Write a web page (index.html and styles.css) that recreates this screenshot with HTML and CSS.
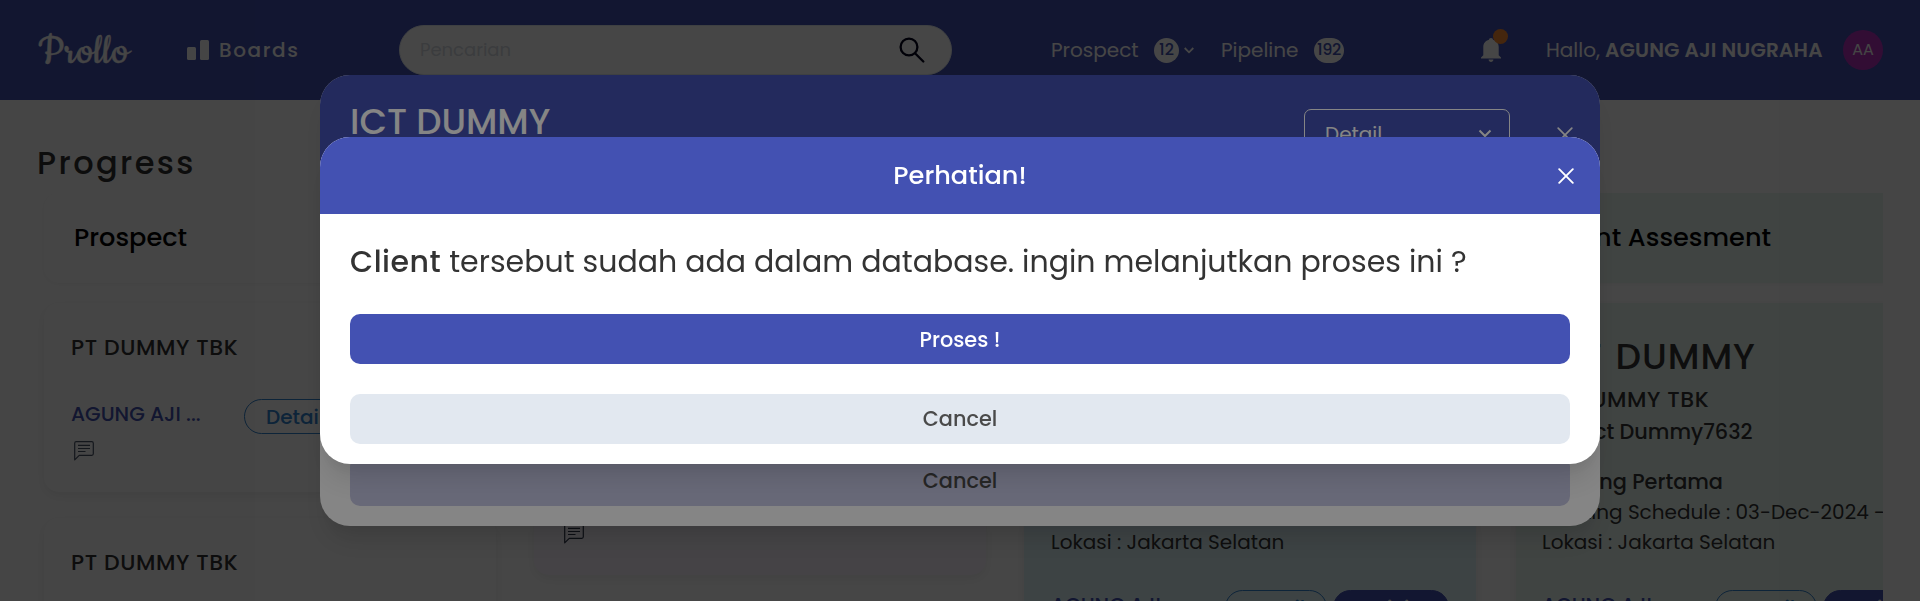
FILE: index.html
```html
<!DOCTYPE html>
<html lang="id">
<head>
<meta charset="utf-8">
<title>Prollo</title>
<link rel="stylesheet" href="styles.css">
</head>
<body>
<div class="app">
  <header class="topbar">
    <div class="logo">Prollo</div>
    <div class="boards">
      <svg width="22" height="20" viewBox="0 0 22 20" fill="currentColor"><rect x="0" y="7" width="9" height="13" rx="1.5"/><rect x="13" y="0" width="9" height="20" rx="1.5"/></svg>
      <span class="boards-label">Boards</span>
    </div>
    <div class="search">
      <span class="placeholder">Pencarian</span>
      <svg width="26" height="26" viewBox="0 0 26 26" fill="none" stroke="#00001a" stroke-width="2.3" stroke-linecap="round"><circle cx="10" cy="10" r="8.4"/><path d="M16 16.2l8.3 8.3"/></svg>
    </div>
    <nav class="counts">
      <span class="nav-prospect">Prospect</span><span class="badge"><span class="b12">12</span></span>
      <svg class="nav-chev" width="10" height="7" viewBox="0 0 10 7" fill="none" stroke="currentColor" stroke-width="1.8"><path d="M.7 1l4.3 4.3L9.3 1"/></svg>
      <span class="nav-pipeline">Pipeline</span><span class="badge wide"><span class="b192">192</span></span>
    </nav>
    <div class="bell">
      <svg width="20" height="24" viewBox="0 0 20 24" fill="currentColor"><path d="M10 0c1.2 0 2 .8 2 1.800 3.600.9 5.700 3.700 5.700 7.200v8.200l2.300 2.300v1H0v-1l2.300-2.300V9c0-3.500 2.100-6.300 5.700-7.200C8 .8 8.800 0 10 0zM7.600 21.600h4.800c0 1.400-1.100 2.400-2.400 2.400s-2.400-1-2.400-2.400z"/></svg>
      <i class="dot"></i>
    </div>
    <div class="user"><span class="hallo">Hallo,</span><span class="username">AGUNG AJI NUGRAHA</span></div>
    <div class="avatar">AA</div>
  </header>

  <main class="page">
    <h1 class="title">Progress</h1>
    <div class="board">
      <section class="col col-a">
        <div class="col-head"><span class="t-prospect">Prospect</span></div>
        <article class="card first">
          <div class="client">PT DUMMY TBK</div>
          <div class="row"><span class="owner">AGUNG AJI ...</span><span class="pill">Detail</span></div>
          <svg class="note" width="20" height="20" viewBox="0 0 20 20" fill="none" stroke="#4a5568" stroke-width="1.2" stroke-linejoin="round"><path d="M.7 18.800V2.200Q.7.700 2.200.700h15.600q1.500 0 1.500 1.500v10.600q0 1.500-1.500 1.500H5.200z"/><path d="M4 4.300h12M4 7.500h12M4 10.500h7.500"/></svg>
        </article>
        <article class="card next"><div class="client">PT DUMMY TBK</div></article>
      </section>
      <section class="col col-b">
        <div class="col-head"></div>
        <article class="card lilac">
          <svg class="note" width="20" height="20" viewBox="0 0 20 20" fill="none" stroke="#2d3748" stroke-width="1.2" stroke-linejoin="round"><path d="M.7 18.800V2.200Q.7.700 2.200.700h15.600q1.500 0 1.500 1.500v10.600q0 1.500-1.500 1.500H5.200z"/><path d="M4 4.300h12M4 7.500h12M4 10.500h7.500"/></svg>
        </article>
      </section>
      <section class="col col-c">
        <div class="col-head"></div>
        <article class="card blue">
          <div class="line">Lokasi : Jakarta Selatan</div>
          <div class="row"><span class="owner">AGUNG AJI ...</span><span class="pill">Detail</span><span class="pill solid">Activity</span></div>
        </article>
      </section>
      <section class="col col-d">
        <div class="col-head green"><span class="t-assess">Client Assesment</span></div>
        <article class="card green tall">
          <div class="big">ICT DUMMY</div>
          <div class="client">PT DUMMY TBK</div>
          <div class="project">Project Dummy7632</div>
          <div class="meeting">Meeting Pertama</div>
          <div class="line sched">Meeting Schedule : 03-Dec-2024 -</div>
          <div class="line">Lokasi : Jakarta Selatan</div>
          <div class="row"><span class="owner">AGUNG AJI ...</span><span class="pill">Detail</span><span class="pill solid">Activity</span></div>
        </article>
      </section>
    </div>
  </main>
</div>

<div class="overlay">
  <div class="modal modal-detail">
    <div class="modal-head detail-head">
      <span class="detail-title">ICT DUMMY</span>
      <span class="select"><span class="select-label">Detail</span><svg width="14" height="10" viewBox="0 0 14 10" fill="none" stroke="currentColor" stroke-width="2"><path d="M1.500 1.500L7 7l5.500-5.500"/></svg></span>
      <svg class="x-low" width="16" height="16" viewBox="0 0 16 16" fill="none" stroke="currentColor" stroke-width="1.700" stroke-linecap="round"><path d="M1.200 1.200l13.600 13.600M14.800 1.200L1.200 14.800"/></svg>
    </div>
    <div class="button muted"><span class="cancel">Cancel</span></div>
  </div>
</div>

<div class="overlay">
  <div class="modal modal-alert">
    <div class="modal-head alert-head">
      <span class="alert-title">Perhatian!</span>
      <svg class="x-top" width="16" height="16" viewBox="0 0 16 16" fill="none" stroke="currentColor" stroke-width="1.900" stroke-linecap="round"><path d="M1.200 1.200l13.600 13.600M14.800 1.200L1.200 14.800"/></svg>
    </div>
    <div class="alert-body">
      <p class="message"><b>Client</b> <span class="rest">tersebut sudah ada dalam database. ingin melanjutkan proses ini ?</span></p>
      <div class="button primary"><span class="proses">Proses !</span></div>
      <div class="button light"><span class="cancel">Cancel</span></div>
    </div>
  </div>
</div>
</body>
</html>
```
FILE: styles.css
```css
* { box-sizing: border-box; }
html, body { margin: 0; height: 601px; overflow: hidden; background: #fff; }
body { font-family: Poppins, Inter, "Open Sans", sans-serif; font-size: 20px; line-height: 30px; color: #333; white-space: nowrap; }
svg { display: block; flex: none; }
span { flex: none; }

.app { height: 601px; overflow: hidden; }
.topbar { height: 100px; background: #4351b2; color: #fff; display: flex; align-items: center; padding-left: 38px; }
.logo { width: 149px; padding-top: 3px; font-family: Cookie, "Grand Hotel", Satisfy, "Dancing Script", "Liberation Serif", serif; font-size: 47px; line-height: 50px; letter-spacing: 0.500px; -webkit-text-stroke: 0.300px #fff; }
.boards { width: 212px; display: flex; align-items: center; gap: 10px; }
.boards-label { font-weight: 500; letter-spacing: 1.600px; }
.search { width: 553px; height: 50px; border-radius: 25px; border: 1px solid #e2e8f0; background: #fff; padding: 0 26px 0 20px; display: flex; align-items: center; justify-content: space-between; }
.placeholder { color: #d5dae2; font-size: 18px; }
.counts { margin-left: 99px; width: 430px; display: flex; align-items: center; }
.nav-prospect { width: 103px; }
.nav-pipeline { width: 93px; }
.badge { width: 25px; height: 25px; border-radius: 13px; background: #fff; color: #4351b2; font-size: 16px; font-weight: 500; display: flex; align-items: center; justify-content: center; }
.badge.wide { width: 30px; }
.b192 { letter-spacing: -0.3px; }
.nav-chev { margin: 0 27px 0 5px; }
.bell { position: relative; width: 65px; }
.dot { position: absolute; left: 12px; top: -9px; width: 15px; height: 15px; border-radius: 50%; background: #fb8c32; }
.user { width: 297px; display: flex; gap: 5px; }
.username { font-weight: 600; letter-spacing: 0.200px; }
.avatar { width: 40px; height: 40px; border-radius: 50%; background: #b832c0; font-size: 16px; display: flex; align-items: center; justify-content: center; }

.title { margin: 0; padding: 39px 0 0 37px; height: 93px; font-size: 32px; line-height: 48px; font-weight: 500; letter-spacing: 2.400px; }
.board { display: flex; padding-left: 44px; width: 1883px; overflow: hidden; height: 408px; }
.col { flex: none; }
.col-a { width: 490px; }
.col-b { width: 490px; }
.col-c { width: 492px; }
.col-d { width: 452px; }
.col-head { width: 452px; height: 90px; margin-bottom: 20px; padding: 0 0 2px 30px; display: flex; align-items: center; color: #000; font-size: 25.600px; font-weight: 500; border-radius: 15px; box-shadow: 0 1px 4px rgba(0, 0, 0, .05); }
.card { width: 452px; border-radius: 15px; padding-left: 27px; box-shadow: 0 4px 12px rgba(0, 0, 0, .07); background: #fff; }
.card.first { height: 189px; padding-top: 29px; }
.card.next { height: 189px; margin-top: 26px; padding-top: 29px; }
.client { font-size: 22px; font-weight: 500; line-height: 32px; letter-spacing: 0.600px; }
.row { display: flex; align-items: flex-start; }
.first .row { margin-top: 34px; height: 43px; }
.owner { color: #4351b2; font-weight: 500; width: 173px; padding-top: 1px; font-size: 20.200px; }
.pill { height: 35px; width: 102px; border: 1px solid #3182ce; color: #3182ce; border-radius: 18px; font-weight: 500; line-height: 34px; text-align: center; margin-top: 1px; }
.pill.solid { background: #4351b2; border-color: #4351b2; color: #fff; width: 116px; margin-left: 6px; }
.note { margin-left: 3px; }
.lilac { background: #faf5ff; height: 272px; padding: 221px 0 0 27px; }
.blue { background: #def3f8; border-radius: 0; padding-top: 224px; height: 400px; }
.blue .row, .tall .row { margin-top: 33px; }
.blue .pill, .tall .pill { margin-top: 0; line-height: 34px; }
.blue .owner { padding-top: 0; width: 174px; }
.tall .owner { padding-top: 0; width: 173px; }
.green { background: #eaf8f1; border-radius: 0; }
.tall { height: 400px; padding: 28px 0 0 26px; }
.big { font-size: 36px; line-height: 52px; font-weight: 500; letter-spacing: 0.900px; word-spacing: 3px; }
.tall .client { line-height: 34px; }
.project { font-weight: 500; line-height: 30px; font-size: 20.800px; }
.meeting { font-weight: 500; margin-top: 20px; font-size: 20.800px; }

/* Dialog layers stack above the page, each dimming what is below. */
.overlay { position: fixed; inset: 0; background: rgba(0, 0, 0, .48); display: flex; justify-content: center; align-items: flex-start; }
.modal { width: 1280px; border-radius: 30px; background: #fff; overflow: hidden; box-shadow: 0 20px 25px -5px rgba(0, 0, 0, .1), 0 10px 10px -5px rgba(0, 0, 0, .04); }
.modal-detail { margin-top: 75px; height: 451px; display: flex; flex-direction: column; justify-content: space-between; padding-bottom: 20px; }
.modal-alert { margin-top: 137px; height: 327px; }
.modal-head { background: #4351b2; color: #fff; display: flex; }
.detail-head { height: 125px; padding: 20px 26px 0 30px; align-items: flex-start; }
.detail-title { font-size: 35.600px; line-height: 54px; font-weight: 500; width: 954px; }
.select { width: 206px; height: 50px; margin-top: 14px; border: 1px solid #fff; border-radius: 7px; padding: 0 17px 0 20px; display: flex; align-items: center; justify-content: space-between; }
.x-low { margin: 32px 0 0 47px; }
.alert-head { height: 77px; position: relative; align-items: center; justify-content: center; }
.alert-title { font-size: 25.600px; font-weight: 500; margin-top: -1px; }
.x-top { position: absolute; right: 26px; top: 31px; }
.alert-body { padding: 25px 30px 0; }
.message { margin: 0 0 30px; font-size: 30px; line-height: 45px; }
.message b { font-weight: 500; letter-spacing: 0.500px; }
.button { height: 50px; border-radius: 10px; display: flex; align-items: center; justify-content: center; font-weight: 500; font-size: 20.800px; }
.primary { background: #4351b2; color: #fff; margin-bottom: 30px; padding-top: 1px; }
.light { background: #e2e8f0; color: #4a4a4a; }
.muted { background: #c8c9e6; color: #4a4a4a; margin: 0 30px; }
```
